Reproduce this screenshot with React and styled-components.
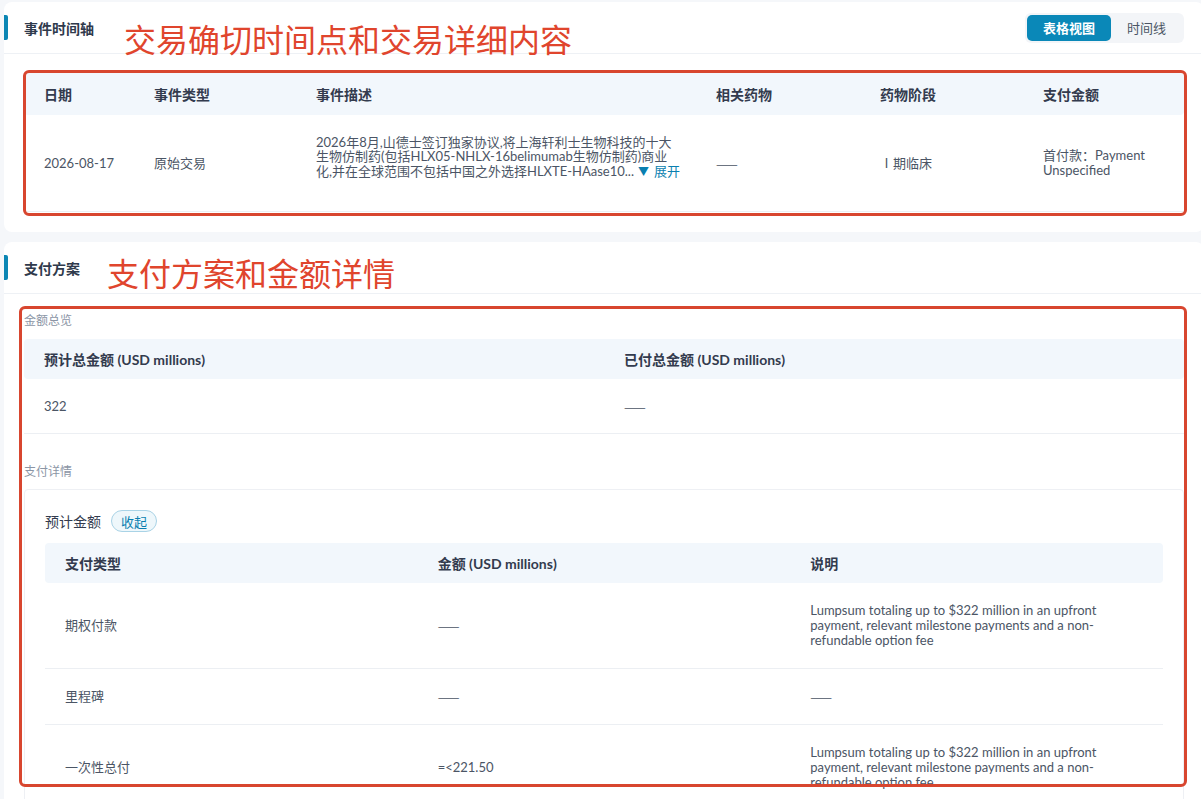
import styled, { createGlobalStyle, css } from 'styled-components';

const GlobalStyle = createGlobalStyle`
  body {
    margin: 0;
    background: #f5f7fa;
    font-family: Lato, "Noto Sans CJK SC", sans-serif;
    color: #4b5565;
    overflow: hidden;
  }
  * { box-sizing: border-box; }
`;

const Page = styled.div`
  position: relative;
  display: flex;
  flex-direction: column;
  gap: 10px;
  padding: 2px 0 0 4px;
  height: 799px;
`;

const Card = styled.section`
  width: 1200px;
  flex-shrink: 0;
  background: #fff;
  border-radius: 8px;
`;

const CardHeader = styled.div`
  position: relative;
  height: 52px;
  display: flex;
  align-items: center;
  justify-content: space-between;
  padding: 0 20px;
  border-bottom: 1px solid #eef1f5;

  &::before {
    content: '';
    position: absolute;
    left: 0;
    top: 13px;
    width: 4px;
    height: 25px;
    background: #0b86b4;
    border-radius: 0 2px 2px 0;
  }
`;

const CardTitle = styled.h3`
  margin: 0;
  font-size: 14px;
  font-weight: 700;
  color: #2f3a4c;
`;

const CardBody = styled.div`
  padding: ${(p) => p.$pad || '19px 20px 20px'};
`;

const Toggle = styled.div`
  display: flex;
  padding: 2px;
  background: #f3f5f8;
  border-radius: 6px;
`;

const ToggleButton = styled.button`
  height: 26px;
  padding: 0 16px;
  border: none;
  border-radius: 5px;
  font-family: inherit;
  font-size: 13px;
  cursor: pointer;
  background: transparent;
  color: #4b5565;

  ${(p) =>
    p.$active &&
    css`
      background: #0a88b8;
      color: #fff;
      font-weight: 700;
    `}
`;

const TableHead = styled.div`
  display: grid;
  grid-template-columns: ${(p) => p.$cols};
  height: ${(p) => p.$h || 40}px;
  background: #f2f7fc;
  border-radius: 4px;
`;

const HeadCell = styled.div`
  display: flex;
  align-items: center;
  padding: 0 20px;
  font-size: 14px;
  font-weight: 700;
  color: #333b4e;
`;

const TableRow = styled.div`
  display: grid;
  grid-template-columns: ${(p) => p.$cols};
  min-height: ${(p) => p.$h || 0}px;
  border-bottom: 1px solid #eceff3;
`;

const Cell = styled.div`
  display: flex;
  flex-direction: column;
  justify-content: center;
  padding: ${(p) => p.$pad || '0 20px'};
  font-size: 13px;
  line-height: 15px;
  color: #4b5565;
`;

const Dash = styled.span`
  font-family: "Noto Sans CJK SC", sans-serif;
  letter-spacing: -0.5px;
`;

const DescLine = styled.span`
  display: block;
  white-space: nowrap;
`;

const DescBlock = styled.div`
  margin-bottom: 12px;
  font-size: 13px;
  line-height: 14.5px;
`;

const ExpandLink = styled.a`
  color: #0a7fb0;
  cursor: pointer;
  margin-left: 4px;

  &::before {
    content: '▼';
    font-size: 11px;
    margin-right: 5px;
  }
`;

const SectionLabel = styled.div`
  font-size: 12px;
  line-height: 20px;
  color: #8b95a5;
  margin: ${(p) => p.$gap || 0}px 0 ${(p) => p.$after || 8}px;
`;

const DetailBox = styled.div`
  border: 1px solid #eef0f4;
  border-radius: 4px;
  padding: 20px;
`;

const PlanTitle = styled.div`
  display: flex;
  align-items: center;
  gap: 10px;
  height: 22px;
  margin-bottom: 11px;
  font-size: 14px;
  color: #333b4e;
`;

const Pill = styled.button`
  display: inline-flex;
  align-items: center;
  height: 22px;
  padding: 0 9px;
  border: 1px solid #a9d3e6;
  background: #eef7fb;
  color: #0a7fb0;
  border-radius: 11px;
  font-family: inherit;
  font-size: 13px;
`;

/* red callouts laid over the page */
const Note = styled.div`
  position: absolute;
  left: ${(p) => p.$x}px;
  top: ${(p) => p.$y}px;
  font-family: "Noto Sans CJK SC", sans-serif;
  font-size: 32px;
  line-height: 32px;
  color: #e0452d;
  white-space: nowrap;
  pointer-events: none;
`;

const NoteBox = styled.div`
  position: absolute;
  left: ${(p) => p.$x}px;
  top: ${(p) => p.$y}px;
  width: ${(p) => p.$w}px;
  height: ${(p) => p.$h}px;
  border: 3px solid #d8462f;
  border-radius: 6px;
  pointer-events: none;
`;

const EVENT_COLS = '110px 162px 400px 164px 163px 1fr';
const THIRDS = '1fr 1fr 1fr';
const HALVES = '1fr 1fr';

const DASH = <Dash>——</Dash>;
const LUMPSUM =
  'Lumpsum totaling up to $322 million in an upfront payment, relevant milestone payments and a non-refundable option fee';

const payments = [
  { type: '期权付款', amount: DASH, note: LUMPSUM },
  { type: '里程碑', amount: DASH, note: DASH },
  { type: '一次性总付', amount: '=<221.50', note: LUMPSUM },
];

export default function App() {
  return (
    <Page>
      <GlobalStyle />

      <Card>
        <CardHeader>
          <CardTitle>事件时间轴</CardTitle>
          <Toggle>
            <ToggleButton $active>表格视图</ToggleButton>
            <ToggleButton>时间线</ToggleButton>
          </Toggle>
        </CardHeader>
        <CardBody>
          <TableHead $cols={EVENT_COLS} $h={42}>
            <HeadCell>日期</HeadCell>
            <HeadCell>事件类型</HeadCell>
            <HeadCell>事件描述</HeadCell>
            <HeadCell>相关药物</HeadCell>
            <HeadCell>药物阶段</HeadCell>
            <HeadCell>支付金额</HeadCell>
          </TableHead>
          <TableRow $cols={EVENT_COLS} $h={97}>
            <Cell>2026-08-17</Cell>
            <Cell>原始交易</Cell>
            <Cell>
              <DescBlock>
                <DescLine>2026年8月,山德士签订独家协议,将上海轩利士生物科技的十大</DescLine>
                <DescLine>生物仿制药(包括HLX05-NHLX-16belimumab生物仿制药)商业</DescLine>
                <DescLine>
                  化,并在全球范围不包括中国之外选择HLXTE-HAase10...
                  <ExpandLink>展开</ExpandLink>
                </DescLine>
              </DescBlock>
            </Cell>
            <Cell>{DASH}</Cell>
            <Cell>Ⅰ期临床</Cell>
            <Cell>首付款：Payment Unspecified</Cell>
          </TableRow>
        </CardBody>
      </Card>

      <Card>
        <CardHeader>
          <CardTitle>支付方案</CardTitle>
        </CardHeader>
        <CardBody $pad="17px 20px 20px">
          <SectionLabel>金额总览</SectionLabel>
          <TableHead $cols={HALVES}>
            <HeadCell>预计总金额 (USD millions)</HeadCell>
            <HeadCell>已付总金额 (USD millions)</HeadCell>
          </TableHead>
          <TableRow $cols={HALVES} $h={55}>
            <Cell>322</Cell>
            <Cell>{DASH}</Cell>
          </TableRow>

          <SectionLabel $gap={28} $after={7}>支付详情</SectionLabel>
          <DetailBox>
            <PlanTitle>
              预计金额
              <Pill>收起</Pill>
            </PlanTitle>
            <TableHead $cols={THIRDS}>
              <HeadCell>支付类型</HeadCell>
              <HeadCell>金额 (USD millions)</HeadCell>
              <HeadCell>说明</HeadCell>
            </TableHead>
            {payments.map((p) => (
              <TableRow key={p.type} $cols={THIRDS}>
                <Cell $pad="20px">{p.type}</Cell>
                <Cell $pad="20px">{p.amount}</Cell>
                <Cell $pad="20px">{p.note}</Cell>
              </TableRow>
            ))}
          </DetailBox>
        </CardBody>
      </Card>

      <Note $x={124} $y={22}>交易确切时间点和交易详细内容</Note>
      <NoteBox $x={23} $y={70} $w={1164} $h={146} />
      <Note $x={107} $y={256}>支付方案和金额详情</Note>
      <NoteBox $x={19} $y={306} $w={1168} $h={481} />
    </Page>
  );
}
